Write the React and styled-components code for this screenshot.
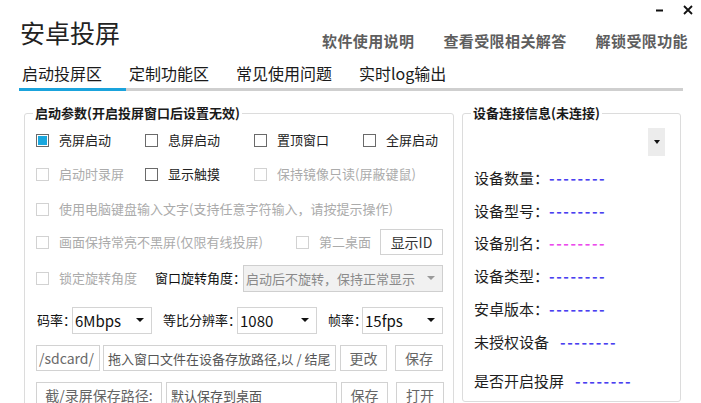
import styled, { createGlobalStyle } from 'styled-components';

const GlobalStyle = createGlobalStyle`
  html, body {
    margin: 0;
    padding: 0;
    background: #fff;
    overflow: hidden;
  }
  body {
    font-family: "Noto Sans CJK SC", "Microsoft YaHei", sans-serif;
    color: #222;
  }
`;

const Window = styled.div`
  width: 701px;
  height: 403px;
  overflow: hidden;
  background: #fff;
`;

const Header = styled.div`
  display: flex;
  justify-content: space-between;
  align-items: flex-start;
  padding: 0 13px 0 20px;
`;

const Title = styled.h1`
  margin: 18px 0 0;
  font-size: 25px;
  line-height: 28px;
  font-weight: 400;
  color: #222;
`;

const HeaderRight = styled.div`
  display: flex;
  flex-direction: column;
  align-items: flex-end;
`;

const WinControls = styled.div`
  display: flex;
  align-items: center;
  gap: 17px;
  height: 20px;
  margin-right: -6px;
`;

const WinButton = styled.span`
  display: flex;
  align-items: center;
  justify-content: center;
  width: 12px;
  height: 20px;
`;

const Links = styled.div`
  display: flex;
  gap: 29px;
  margin-top: 11px;
`;

const Link = styled.a`
  font-size: 15px;
  line-height: 20px;
  font-weight: 700;
  letter-spacing: 0.4px;
  color: #5e5e5e;
  text-decoration: none;
  cursor: pointer;
`;

const TabBar = styled.div`
  display: flex;
  margin: 12px 0 0 19px;
  width: 664px;
  border-bottom: 3px solid #cfcfcf;
`;

const Tab = styled.div`
  padding: 0 24px 4px 3px;
  font-size: 16px;
  line-height: 21px;
  color: #1a1a1a;
  margin-bottom: -3px;
  border-bottom: 3px solid ${(p) => (p.$active ? '#1aa3dc' : 'transparent')};
`;

const Main = styled.div`
  display: flex;
  align-items: flex-start;
  gap: 8px;
  margin: 13px 0 0 24px;
`;

const Panel = styled.fieldset`
  margin: 0;
  min-width: 0;
  border: 1px solid #dcdcdc;
  border-radius: 3px;
  box-sizing: border-box;
  width: ${(p) => p.$width}px;
  padding: 5px ${(p) => p.$pr}px ${(p) => p.$pb}px 11px;
`;

const Legend = styled.legend`
  margin-left: -3px;
  padding: 0 2px;
  font-size: 13px;
  line-height: 18px;
  font-weight: 700;
  color: #1a1a1a;
`;

const Row = styled.div`
  display: ${(p) => (p.$grid ? 'grid' : 'flex')};
  grid-template-columns: ${(p) => p.$grid || 'none'};
  align-items: center;
  height: 26px;
  margin-top: ${(p) => p.$mt || 0}px;
`;

const CheckItem = styled.label`
  display: flex;
  align-items: center;
  gap: 10px;
  font-size: 13px;
  line-height: 18px;
  white-space: nowrap;
  color: ${(p) => (p.$disabled ? '#ababab' : '#222')};
`;

const Box = styled.span`
  width: 9px;
  height: 9px;
  padding: 1px;
  flex: none;
  border: 1px solid ${(p) => (p.$disabled ? '#d2d2d2' : '#6a6a6a')};
  background: ${(p) => (p.$checked ? '#19a7de' : '#fff')};
  background-clip: content-box;
`;

const Label = styled.span`
  flex: none;
  width: ${(p) => p.$w}px;
  font-size: 13px;
  line-height: 18px;
  white-space: nowrap;
  color: #111;
  margin-left: ${(p) => p.$ml || 0}px;
`;

const Select = styled.div`
  position: relative;
  box-sizing: border-box;
  display: flex;
  align-items: center;
  width: ${(p) => p.$w}px;
  height: ${(p) => p.$h || 27}px;
  padding-left: 2px;
  border: 1px solid ${(p) => (p.$disabled ? '#cfcfcf' : '#d4d4d4')};
  background: ${(p) => (p.$disabled ? '#f1f1f1' : '#fff')};
  color: ${(p) => (p.$disabled ? '#8a8a8a' : '#111')};
  font-size: ${(p) => (p.$disabled ? 13 : 15)}px;
  white-space: nowrap;
  overflow: hidden;
`;

const Arrow = styled.span`
  position: absolute;
  right: 7px;
  top: 50%;
  margin-top: -2px;
  border-left: 4px solid transparent;
  border-right: 4px solid transparent;
  border-top: 4px solid ${(p) => (p.$light ? '#9a9a9a' : '#111')};
`;

const Button = styled.button`
  box-sizing: border-box;
  flex: none;
  width: ${(p) => p.$w}px;
  height: 26px;
  margin-left: ${(p) => p.$ml || 0}px;
  padding: 0;
  border: 1px solid #d2d2d2;
  background: #fff;
  font-family: inherit;
  font-size: 14px;
  color: ${(p) => (p.$dark ? '#333' : '#666')};
`;

const Input = styled.div`
  box-sizing: border-box;
  flex: none;
  display: flex;
  align-items: center;
  width: ${(p) => p.$w}px;
  height: 26px;
  margin-left: ${(p) => p.$ml || 0}px;
  padding-left: 4px;
  border: 1px solid #d2d2d2;
  font-size: 13px;
  color: #555;
  white-space: nowrap;
  overflow: hidden;
`;

const PathTag = styled(Input)`
  padding-left: 2px;
  font-size: 14px;
  color: #6a6a6a;
`;

const DropButton = styled.div`
  align-self: flex-end;
  display: flex;
  align-items: center;
  justify-content: center;
  width: 17px;
  height: 28px;
  margin-top: 1px;
  background: #ececec;
`;

const DropArrow = styled.span`
  border-left: 3px solid transparent;
  border-right: 3px solid transparent;
  border-top: 4px solid #111;
`;

const InfoList = styled.div`
  display: flex;
  flex-direction: column;
`;

const InfoRow = styled.div`
  display: flex;
  align-items: center;
  font-size: 15px;
  line-height: 20px;
  color: #1e1e1e;
  margin-top: ${(p) => p.$mt}px;
`;

const Dashes = styled.span`
  margin-left: ${(p) => p.$ml || 0}px;
  color: ${(p) => p.$color};
  letter-spacing: 1.6px;
  font-weight: 700;
`;

const infos = [
  { label: '设备数量：', color: '#4a3ff0', mt: 12 },
  { label: '设备型号：', color: '#4a3ff0', mt: 13 },
  { label: '设备别名：', color: '#ec4aec', mt: 12 },
  { label: '设备类型：', color: '#4a3ff0', mt: 13 },
  { label: '安卓版本：', color: '#4a3ff0', mt: 13 },
  { label: '未授权设备', color: '#4a3ff0', mt: 13, gap: 11 },
  { label: '是否开启投屏', color: '#4a3ff0', mt: 19, gap: 11 },
];

const Check = ({ children, checked, disabled }) => (
  <CheckItem $disabled={disabled}>
    <Box $checked={checked} $disabled={disabled} />
    {children}
  </CheckItem>
);

export default function App() {
  return (
    <Window>
      <GlobalStyle />
      <Header>
        <Title>安卓投屏</Title>
        <HeaderRight>
          <WinControls>
            <WinButton>
              <svg width="7" height="3" viewBox="0 0 7 3">
                <rect x="0" y="0.5" width="7" height="2" fill="#111" />
              </svg>
            </WinButton>
            <WinButton>
              <svg width="10" height="10" viewBox="0 0 10 10">
                <path d="M1 1 L9 9 M9 1 L1 9" stroke="#111" strokeWidth="1.8" />
              </svg>
            </WinButton>
          </WinControls>
          <Links>
            <Link>软件使用说明</Link>
            <Link>查看受限相关解答</Link>
            <Link>解锁受限功能</Link>
          </Links>
        </HeaderRight>
      </Header>

      <TabBar>
        <Tab $active>启动投屏区</Tab>
        <Tab>定制功能区</Tab>
        <Tab>常见使用问题</Tab>
        <Tab>实时log输出</Tab>
      </TabBar>

      <Main>
        <Panel $width={430} $pr={10} $pb={12}>
          <Legend>启动参数(开启投屏窗口后设置无效)</Legend>
          <Row $grid="109px 109px 109px 109px">
            <Check checked>亮屏启动</Check>
            <Check>息屏启动</Check>
            <Check>置顶窗口</Check>
            <Check>全屏启动</Check>
          </Row>
          <Row $grid="109px 109px 1fr" $mt={8}>
            <Check disabled>启动时录屏</Check>
            <Check>显示触摸</Check>
            <Check disabled>保持镜像只读(屏蔽键鼠)</Check>
          </Row>
          <Row $mt={9}>
            <Check disabled>使用电脑键盘输入文字(支持任意字符输入，请按提示操作)</Check>
          </Row>
          <Row $grid="260px 84px 63px" $mt={7}>
            <Check disabled>画面保持常亮不黑屏(仅限有线投屏)</Check>
            <Check disabled>第二桌面</Check>
            <Button $w={63} $dark>显示ID</Button>
          </Row>
          <Row $mt={10}>
            <Label $w={119}>
              <Check disabled>锁定旋转角度</Check>
            </Label>
            <Label $w={88}>窗口旋转角度：</Label>
            <Select $w={200} $disabled>
              启动后不旋转，保持正常显示
              <Arrow $light />
            </Select>
          </Row>
          <Row $mt={16}>
            <Label $w={35} $ml={1}>码率：</Label>
            <Select $w={80}>
              6Mbps
              <Arrow />
            </Select>
            <Label $w={74} $ml={11}>等比分辨率：</Label>
            <Select $w={80}>
              1080
              <Arrow />
            </Select>
            <Label $w={34} $ml={11}>帧率：</Label>
            <Select $w={81}>
              15fps
              <Arrow />
            </Select>
          </Row>
          <Row $mt={12}>
            <PathTag $w={64}>/sdcard/</PathTag>
            <Input $w={233} $ml={3}>拖入窗口文件在设备存放路径,以 / 结尾</Input>
            <Button $w={47} $ml={4}>更改</Button>
            <Button $w={48} $ml={8}>保存</Button>
          </Row>
          <Row $mt={11}>
            <Button $w={126}>截/录屏保存路径:</Button>
            <Input $w={171} $ml={4}>默认保存到桌面</Input>
            <Button $w={47} $ml={4}>保存</Button>
            <Button $w={48} $ml={8}>打开</Button>
          </Row>
        </Panel>

        <Panel $width={219} $pr={15} $pb={10}>
          <Legend>设备连接信息(未连接)</Legend>
          <InfoList>
            <DropButton>
              <DropArrow />
            </DropButton>
            {infos.map((info) => (
              <InfoRow key={info.label} $mt={info.mt}>
                {info.label}
                <Dashes $color={info.color} $ml={info.gap}>
                  --------
                </Dashes>
              </InfoRow>
            ))}
          </InfoList>
        </Panel>
      </Main>
    </Window>
  );
}
